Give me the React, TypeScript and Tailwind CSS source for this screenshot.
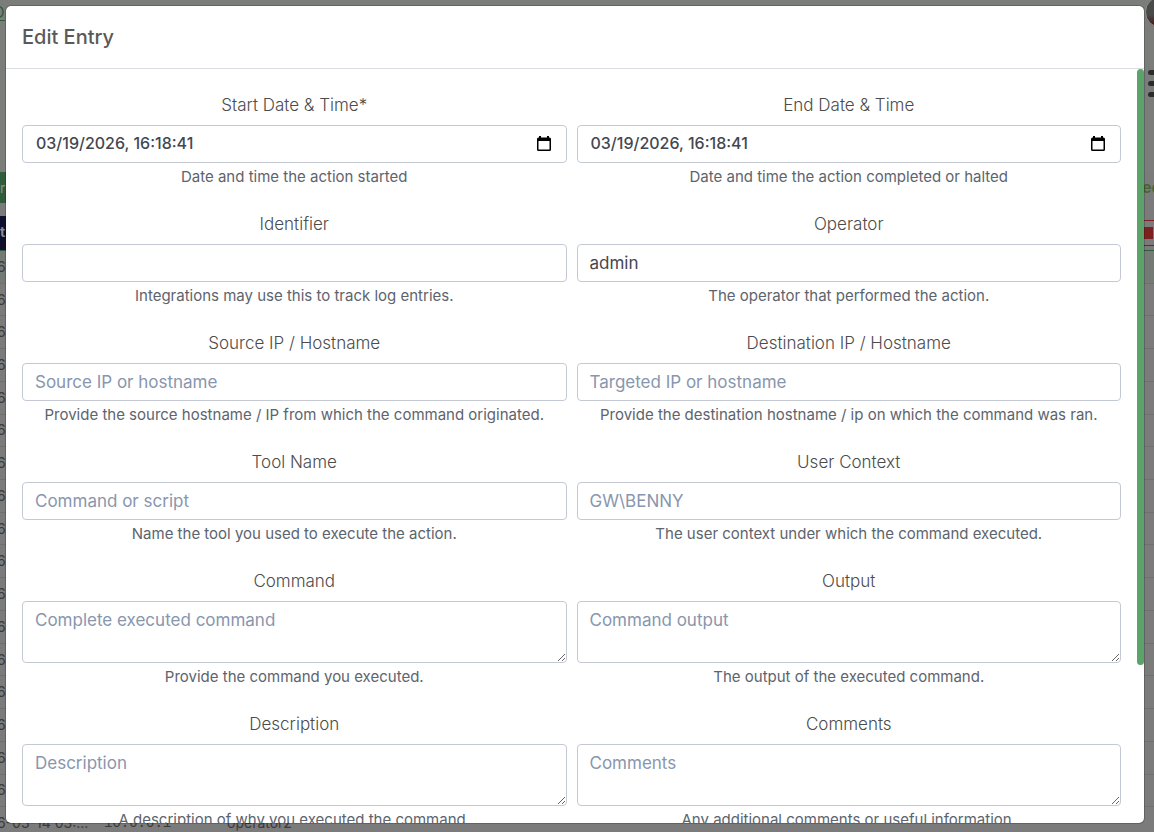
import React from 'react';

interface Field {
  id: string;
  label: string;
  help: string;
  kind: 'text' | 'datetime' | 'textarea';
  value?: string;
  placeholder?: string;
}

const fields: Field[] = [
  { id: 'start_date', label: 'Start Date & Time*', help: 'Date and time the action started', kind: 'datetime', value: '03/19/2026, 16:18:41' },
  { id: 'end_date', label: 'End Date & Time', help: 'Date and time the action completed or halted', kind: 'datetime', value: '03/19/2026, 16:18:41' },
  { id: 'identifier', label: 'Identifier', help: 'Integrations may use this to track log entries.', kind: 'text' },
  { id: 'operator', label: 'Operator', help: 'The operator that performed the action.', kind: 'text', value: 'admin' },
  { id: 'source_ip', label: 'Source IP / Hostname', help: 'Provide the source hostname / IP from which the command originated.', kind: 'text', placeholder: 'Source IP or hostname' },
  { id: 'dest_ip', label: 'Destination IP / Hostname', help: 'Provide the destination hostname / ip on which the command was ran.', kind: 'text', placeholder: 'Targeted IP or hostname' },
  { id: 'tool', label: 'Tool Name', help: 'Name the tool you used to execute the action.', kind: 'text', placeholder: 'Command or script' },
  { id: 'user_context', label: 'User Context', help: 'The user context under which the command executed.', kind: 'text', placeholder: 'GW\\BENNY' },
  { id: 'command', label: 'Command', help: 'Provide the command you executed.', kind: 'textarea', placeholder: 'Complete executed command' },
  { id: 'output', label: 'Output', help: 'The output of the executed command.', kind: 'textarea', placeholder: 'Command output' },
  { id: 'description', label: 'Description', help: 'A description of why you executed the command.', kind: 'textarea', placeholder: 'Description' },
  { id: 'comments', label: 'Comments', help: 'Any additional comments or useful information.', kind: 'textarea', placeholder: 'Comments' },
];

const controlClass =
  'block w-full rounded border border-[#c4c9d3] bg-white px-3 text-[17px] leading-6 text-[#434750] placeholder:text-[#8896ae] placeholder:opacity-100 focus:outline-none';

const CalendarIcon = () => (
  <svg width="14" height="15" viewBox="0 0 14 15" aria-hidden="true">
    <path
      fill="#000"
      d="M2 0h2v1.500h6V0h2v1.500h.5A1.500 1.500 0 0 1 14 3v10.500A1.500 1.500 0 0 1 12.500 15h-11A1.500 1.500 0 0 1 0 13.500V3a1.500 1.500 0 0 1 1.500-1.500H2zM1.500 5v8.500h11V5z"
    />
  </svg>
);

const FormField: React.FC<{ field: Field }> = ({ field }) => {
  const helpId = `${field.id}_help`;

  return (
    <div className="text-center">
      <label htmlFor={field.id} className="mb-2 block text-[17px] leading-6 font-light text-[#4c4c4c]">
        {field.label}
      </label>
      {field.kind === 'datetime' && (
        <div className="flex h-[38px] items-center rounded border border-[#c4c9d3] bg-white pr-[15px] pb-0.5 pl-[13px]">
          <input
            id={field.id}
            aria-describedby={helpId}
            defaultValue={field.value}
            className="min-w-0 flex-1 text-base font-medium text-[#434750] focus:outline-none"
          />
          <button type="button" aria-label={`Pick ${field.label}`}>
            <CalendarIcon />
          </button>
        </div>
      )}
      {field.kind === 'text' && (
        <input
          id={field.id}
          type="text"
          aria-describedby={helpId}
          defaultValue={field.value}
          placeholder={field.placeholder}
          className={`h-[38px] ${controlClass}`}
        />
      )}
      {field.kind === 'textarea' && (
        <textarea
          id={field.id}
          aria-describedby={helpId}
          placeholder={field.placeholder}
          className={`h-[62px] resize-y py-1.5 ${controlClass}`}
        />
      )}
      <small id={helpId} className="mt-1 block text-[15px] leading-5 text-[#5d646d]">
        {field.help}
      </small>
    </div>
  );
};

// Log table that sits dimmed behind the dialog
const LogPage = () => (
  <div className="flex h-full flex-col overflow-hidden bg-[#7b7b7b] text-[#3a3a3a]" aria-hidden="true">
    <div className="flex h-[172px] justify-between bg-[#7b7d7b]">
      <span className="-ml-[7px] h-[21px] border-b border-[#2e5c38] text-base text-[#2e5c38]">D</span>
      <div className="flex w-[9px] flex-col gap-10">
        <span className="-mt-1 h-8 w-8 rounded-full border border-[#8a8a8a] bg-linear-to-b from-[#4a4a4a] from-60% to-[#3a0c0c]" />
        <div className="flex flex-col gap-1.5 pt-0.5 pl-[3px]">
          <span className="h-[5px] w-6 rounded-full bg-[#2b2b2b]" />
          <span className="h-[5px] w-6 rounded-full bg-[#2b2b2b]" />
          <span className="h-[5px] w-6 rounded-full bg-[#2b2b2b]" />
        </div>
      </div>
    </div>
    <div className="flex h-11 justify-between">
      <span className="h-[31px] w-5 bg-[#2f5c3b] text-sm leading-[31px] text-[#8c8c8c]">r</span>
      <span className="w-[12px] text-base leading-[31px] font-bold text-[#4a6638]">ee</span>
    </div>
    <div className="flex h-[35px] justify-between border-b border-[#2f5c3b]">
      <span className="w-5 bg-[#10102e] text-sm leading-[32px] font-bold text-[#8c8c8c]">t</span>
      <span className="mt-1 flex h-[26px] w-[10px] items-center border-y border-[#7d2020]">
        <span className="h-3 w-[9px] bg-[#7d2020]" />
      </span>
    </div>
    <div className="-mb-2 grid flex-1 auto-rows-fr">
      {Array.from({ length: 17 }, (_, i) => (
        <div
          key={i}
          className="flex items-center border-b border-[#707070] text-sm leading-4 first:bg-[#747b75]"
        >
          <span className="-ml-[3px]">6</span>
        </div>
      ))}
      <div className="flex items-center border-b border-[#707070] text-sm leading-4">
        <span className="-ml-[3px] w-[107px]">6-03-14 03:...</span>
        <span className="w-[123px] font-['Liberation_Mono',monospace]">10.0.0.1</span>
        <span>operator2</span>
      </div>
    </div>
  </div>
);

const App: React.FC = () => (
  <div className="relative h-screen overflow-hidden font-['Inter','Open_Sans',sans-serif]">
    <LogPage />
    <div className="absolute inset-0 flex pt-[5px] pr-[9px] pb-2 pl-[5px]">
      <div
        role="dialog"
        aria-labelledby="dialog_title"
        className="flex min-w-0 flex-1 flex-col overflow-hidden rounded-md border border-black/20 bg-white bg-clip-padding"
      >
        <header className="border-b border-[#d9dde3] px-4 py-4">
          <h5 id="dialog_title" className="text-xl leading-[30px] font-medium text-[#595959]">
            Edit Entry
          </h5>
        </header>
        <div className="flex min-h-0 flex-1">
          <form className="grid min-w-0 flex-1 grid-cols-2 content-start gap-x-2.5 gap-y-[25px] overflow-y-auto px-4 pt-6 [scrollbar-width:none]">
            {fields.map((field) => (
              <FormField key={field.id} field={field} />
            ))}
          </form>
          <div className="w-[7px]">
            <div className="h-[79%] rounded-full bg-[#5ba36b]" />
          </div>
        </div>
      </div>
    </div>
  </div>
);

export default App;
